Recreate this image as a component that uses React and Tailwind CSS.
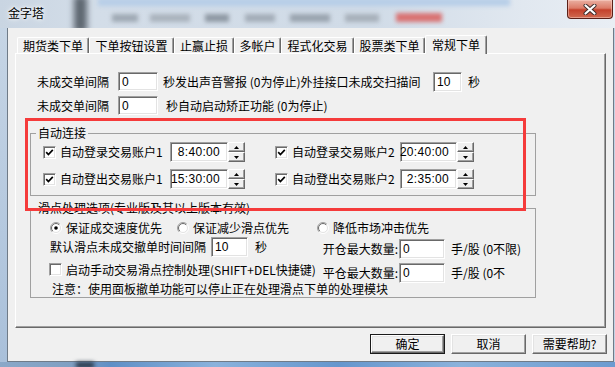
import React from "react";

function Edit({ className = "", children }) {
  return (
    <div
      className={
        "bg-white border border-t-[#a0a0a0] border-l-[#a0a0a0] border-r-white border-b-white shadow-[inset_1px_1px_0_#696969,inset_-1px_-1px_0_#e3e3e3] flex items-center shrink-0 font-['Liberation_Sans',sans-serif] text-[12px] text-black " +
        className
      }
    >
      {children}
    </div>
  );
}

function Check({ checked }) {
  return (
    <div className="w-[13px] h-[13px] shrink-0 bg-white border border-t-[#a0a0a0] border-l-[#a0a0a0] border-r-white border-b-white shadow-[inset_1px_1px_0_#696969,inset_-1px_-1px_0_#e3e3e3] flex items-center justify-center">
      {checked && (
        <svg width="9" height="9" viewBox="0 0 9 9">
          <path d="M1.2 4.2 L3.4 6.5 L7.8 1.8" fill="none" stroke="#000" strokeWidth="1.7" />
        </svg>
      )}
    </div>
  );
}

function Radio({ checked }) {
  return (
    <svg width="12" height="12" viewBox="0 0 12 12" className="shrink-0">
      <defs>
        <linearGradient id="rgo" x1="0" y1="0" x2="1" y2="1">
          <stop offset="0.45" stopColor="#a0a0a0" />
          <stop offset="0.55" stopColor="#ffffff" />
        </linearGradient>
        <linearGradient id="rgi" x1="0" y1="0" x2="1" y2="1">
          <stop offset="0.45" stopColor="#696969" />
          <stop offset="0.55" stopColor="#e3e3e3" />
        </linearGradient>
      </defs>
      <circle cx="6" cy="6" r="5.5" fill="none" stroke="url(#rgo)" strokeWidth="1" />
      <circle cx="6" cy="6" r="4.5" fill="#fff" stroke="url(#rgi)" strokeWidth="1" />
      {checked && <circle cx="6" cy="6" r="1.8" fill="#000" />}
    </svg>
  );
}

function SpinHalf({ up }) {
  return (
    <div className="h-[10px] w-[17px] bg-[#f0f0f0] border border-t-white border-l-white border-r-[#696969] border-b-[#696969] shadow-[inset_-1px_-1px_0_#a0a0a0] flex items-center justify-center">
      <svg width="5" height="3" viewBox="0 0 5 3">
        <path d={up ? "M0 3 L2.5 0 L5 3Z" : "M0 0 L5 0 L2.5 3Z"} fill="#000" />
      </svg>
    </div>
  );
}

function TimeField({ w, value }) {
  return (
    <div className="flex items-center">
      <Edit className={w + " h-[20px] justify-end pr-[7px] tracking-[0.3px]"}>{value}</Edit>
      <div className="flex flex-col">
        <SpinHalf up />
        <SpinHalf />
      </div>
    </div>
  );
}

function Btn({ children, def }) {
  const inner = (
    <div className="w-full h-full flex items-center justify-center bg-[#f0f0f0] border border-t-white border-l-white border-r-[#696969] border-b-[#696969] shadow-[inset_-1px_-1px_0_#a0a0a0,inset_1px_1px_0_#e3e3e3]">
      {children}
    </div>
  );
  if (def) {
    return <div className="w-[75px] h-[20px] border border-[#1a1a1a]">{inner}</div>;
  }
  return <div className="w-[75px] h-[20px]">{inner}</div>;
}

function Tab({ children, className = "" }) {
  return (
    <div
      className={
        "h-[16px] flex items-center justify-center bg-[#f0f0f0] border-t border-l border-r border-t-white border-l-white border-r-[#696969] shadow-[inset_-1px_0_0_#a0a0a0] rounded-t-[2px] whitespace-nowrap " +
        className
      }
    >
      {children}
    </div>
  );
}

export default function App() {
  return (
    <div className="w-[615px] h-[367px] overflow-hidden relative flex flex-col bg-[#c9d8e8] font-['Noto_Sans_CJK_SC',sans-serif] text-[12px] leading-[14px] text-black">
      {/* Title bar (Aero glass) */}
      <div className="h-[28px] relative shrink-0 overflow-hidden bg-[linear-gradient(to_right,#c9d5e2_0%,#d3dde8_15%,#d0dbe7_60%,#e1e8f0_85%,#e9eef4_100%)]">
        <div className="absolute left-[98px] top-[-2px] w-[412px] h-[8px] bg-[#b7cee8] blur-[2px]" />
        <div className="absolute left-[74px] top-[-4px] w-[13px] h-[36px] bg-[#5d6670] blur-[3px]" />
        <div className="absolute left-[112px] top-[14px] w-[26px] h-[8px] bg-[#9fa9b4] blur-[2px]" />
        <div className="absolute left-[150px] top-[14px] w-[40px] h-[8px] bg-[#aab3bd] blur-[2px]" />
        <div className="absolute left-[205px] top-[14px] w-[24px] h-[8px] bg-[#8f99a4] blur-[2px]" />
        <div className="absolute left-[245px] top-[14px] w-[30px] h-[8px] bg-[#a3adb8] blur-[2px]" />
        <div className="absolute left-[290px] top-[14px] w-[40px] h-[8px] bg-[#9aa4af] blur-[2px]" />
        <div className="absolute left-[345px] top-[14px] w-[34px] h-[8px] bg-[#a7b0ba] blur-[2px]" />
        <div className="absolute left-[396px] top-[13px] w-[46px] h-[9px] bg-[#d97272] blur-[2px]" />
        <div className="relative pl-[8px] pt-[6px] text-[12px] [text-shadow:0_0_6px_#fff,0_0_3px_#fff]">金字塔</div>
        <div className="absolute left-[567px] top-0 w-[46px] h-[19px] rounded-b-[4px] border border-t-0 border-[#5a2018] bg-[linear-gradient(to_bottom,#eab0a2_0%,#dc7b68_45%,#c4412c_55%,#cf6a50_100%)] shadow-[inset_0_0_0_1px_rgba(255,220,210,0.45)] flex items-center justify-center">
          <svg width="14" height="11" viewBox="0 0 14 11">
            <path d="M2.5 1.5 L11.5 9.5 M11.5 1.5 L2.5 9.5" stroke="#3a2a28" strokeWidth="4" strokeLinecap="round" />
            <path d="M2.5 1.5 L11.5 9.5 M11.5 1.5 L2.5 9.5" stroke="#ffffff" strokeWidth="2.2" strokeLinecap="round" />
          </svg>
        </div>
      </div>

      {/* Body */}
      <div className="flex h-[334px] shrink-0">
        <div className="w-[7px] bg-[linear-gradient(to_bottom,#c6d5e5,#a9c0da)]" />
        <div className="w-[607px] bg-[#f0f0f0] border-l border-r border-b border-[#6f7b88] flex flex-col pt-[7px] pl-[7px]">
          {/* Tabs */}
          <div className="flex items-end h-[18px] pl-[2px] relative z-10">
            <Tab className="w-[72px]">期货类下单</Tab>
            <Tab className="w-[85px]">下单按钮设置</Tab>
            <Tab className="w-[60px]">止赢止损</Tab>
            <Tab className="w-[47px]">多帐户</Tab>
            <Tab className="w-[73px]">程式化交易</Tab>
            <Tab className="w-[71px]">股票类下单</Tab>
            <Tab className="w-[62px] !h-[19px] -mb-[1px]">常规下单</Tab>
          </div>

          {/* Panel */}
          <div className="w-[591px] h-[275px] border border-t-white border-l-white border-r-[#696969] border-b-[#696969] shadow-[inset_-1px_-1px_0_#a0a0a0] pt-[18px] pl-[21px] flex flex-col">
            {/* Row 1 */}
            <div className="flex items-center h-[19px]">
              <div className="w-[81px]">未成交单间隔</div>
              <Edit className="w-[40px] h-[19px] pl-[3px]">0</Edit>
              <div className="ml-[5px] w-[270px] whitespace-nowrap">秒发出声音警报 (0为停止)外挂接口未成交扫描间</div>
              <Edit className="w-[29px] h-[20px] pl-[3px]">10</Edit>
              <div className="ml-[6px]">秒</div>
            </div>
            {/* Row 2 */}
            <div className="flex items-center h-[19px] mt-[5px]">
              <div className="w-[81px]">未成交单间隔</div>
              <Edit className="w-[40px] h-[19px] pl-[3px]">0</Edit>
              <div className="ml-[8px] whitespace-nowrap">秒自动启动矫正功能 (0为停止)</div>
            </div>

            {/* Group 1 */}
            <fieldset className="ml-[-7px] w-[506px] mt-[11px] border border-[#a0a0a0] px-0 pb-[6px]">
              <legend className="ml-[5px] px-[2px] leading-[14px]">自动连接</legend>
              <div className="flex items-center h-[20px] mt-[2px] pl-[12px]">
                <Check checked />
                <div className="ml-[4px] w-[110px] whitespace-nowrap">自动登录交易账户1</div>
                <TimeField w="w-[58px]" value="8:40:00" />
                <div className="ml-[30px]">
                  <Check checked />
                </div>
                <div className="ml-[4px] w-[108px] whitespace-nowrap">自动登录交易账户2</div>
                <TimeField w="w-[57px]" value="20:40:00" />
              </div>
              <div className="flex items-center h-[20px] mt-[7px] pl-[12px]">
                <Check checked />
                <div className="ml-[4px] w-[110px] whitespace-nowrap">自动登出交易账户1</div>
                <TimeField w="w-[58px]" value="15:30:00" />
                <div className="ml-[30px]">
                  <Check checked />
                </div>
                <div className="ml-[4px] w-[108px] whitespace-nowrap">自动登出交易账户2</div>
                <TimeField w="w-[57px]" value="2:35:00" />
              </div>
            </fieldset>

            {/* Group 2 */}
            <fieldset className="ml-[-7px] w-[506px] mt-[5px] border border-[#a0a0a0] px-0 pb-[1px]">
              <legend className="ml-[5px] px-[2px] leading-[14px] whitespace-nowrap">滑点处理选项(专业版及其以上版本有效)</legend>
              <div className="flex items-center h-[14px] mt-[6px] pl-[19px]">
                <div className="w-[127px] flex items-center gap-[4px]">
                  <Radio checked />
                  <span>保证成交速度优先</span>
                </div>
                <div className="w-[140px] flex items-center gap-[4px]">
                  <Radio />
                  <span>保证减少滑点优先</span>
                </div>
                <div className="flex items-center gap-[4px]">
                  <Radio />
                  <span>降低市场冲击优先</span>
                </div>
              </div>
              <div className="flex items-start mt-[2px] h-[22px]">
                <div className="w-[288px] pl-[19px] flex items-center h-[20px]">
                  <div className="w-[161px] whitespace-nowrap">默认滑点未成交撤单时间间隔</div>
                  <Edit className="w-[37px] h-[20px] pl-[3px]">10</Edit>
                  <div className="ml-[7px]">秒</div>
                </div>
                <div className="flex items-center h-[20px] mt-[2px]">
                  <div className="w-[80px] text-right pr-[1px] whitespace-nowrap">开仓最大数量:</div>
                  <Edit className="w-[46px] h-[20px] pl-[3px]">0</Edit>
                  <div className="ml-[6px] whitespace-nowrap">手/股 (0不限)</div>
                </div>
              </div>
              <div className="flex items-start mt-[4px] h-[19px]">
                <div className="w-[288px] pl-[18px] flex items-center h-[13px]">
                  <Check />
                  <div className="ml-[4px] whitespace-nowrap">启动手动交易滑点控制处理(SHIFT+DEL快捷键)</div>
                </div>
                <div className="flex items-center h-[19px]">
                  <div className="w-[80px] text-right pr-[1px] whitespace-nowrap">平仓最大数量:</div>
                  <Edit className="w-[46px] h-[20px] pl-[3px]">0</Edit>
                  <div className="ml-[6px] whitespace-nowrap">手/股 (0不</div>
                </div>
              </div>
              <div className="pl-[21px] h-[14px] whitespace-nowrap">注意：使用面板撤单功能可以停止正在处理滑点下单的处理模块</div>
            </fieldset>
          </div>

          {/* Buttons */}
          <div className="flex justify-end gap-[6px] pr-[6px] mt-[6px]">
            <Btn def>确定</Btn>
            <Btn>取消</Btn>
            <Btn>需要帮助?</Btn>
          </div>
        </div>
        <div className="flex-1 bg-[#c3d3e4]" />
      </div>

      {/* Bottom frame */}
      <div className="flex-1 relative bg-[linear-gradient(to_right,#8aa8c8_0%,#7f9fc2_12%,#5f8fc6_18%,#8ab2dc_35%,#6596cd_55%,#8bb2db_75%,#6c9bd0_100%)]">
        <div className="absolute left-[76px] top-0 w-[18px] h-[6px] bg-[#2c3a4a] blur-[2px]" />
      </div>

      {/* Red annotation rectangle */}
      <div className="absolute left-[25px] top-[118px] w-[501px] h-[93px] border-[3px] border-[#f53b3b] pointer-events-none" />
    </div>
  );
}
